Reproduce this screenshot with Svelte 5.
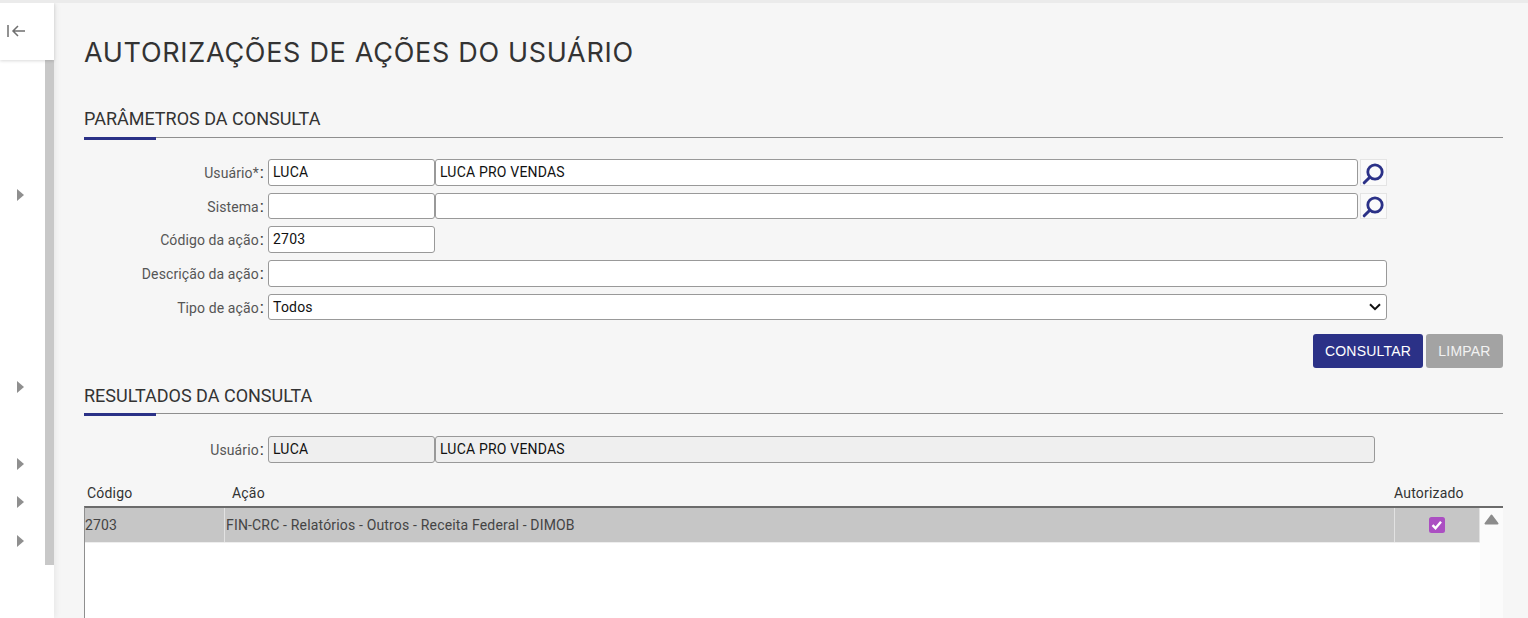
<script>
  const side = [194, 386, 463, 501, 540];
</script>

<div class="page">
  <aside class="side">
    <div class="toggle">
      <svg width="19" height="14" viewBox="0 0 19 14" fill="none" stroke="#6f6f6f" stroke-width="1.5"><path d="M1 1v12M18 7H6M11 2L6 7l5 5"/></svg>
    </div>
    <div class="rail">
      {#each side as y}
        <span class="tri" style="top:{y - 65}px"></span>
      {/each}
      <div class="thumb"></div>
    </div>
  </aside>

  <main class="main">
    <h1>AUTORIZAÇÕES DE AÇÕES DO USUÁRIO</h1>

    <section class="sec first">
      <h2>PARÂMETROS DA CONSULTA</h2>
    </section>

    <div class="form">
      <div class="row">
        <span class="lbl">Usuário*<b>:</b></span>
        <span class="inp code">LUCA</span>
        <span class="inp grow">LUCA PRO VENDAS</span>
        <button class="lens" aria-label="Buscar"><svg width="25" height="25" viewBox="0 0 25 25" fill="none" stroke="#2b3187"><circle cx="14" cy="12" r="7.2" stroke-width="2.8"/><path d="M8.8 17.2L3.2 22.8" stroke-width="3" stroke-linecap="round"/></svg></button>
      </div>
      <div class="row">
        <span class="lbl">Sistema<b>:</b></span>
        <span class="inp code"></span>
        <span class="inp grow"></span>
        <button class="lens" aria-label="Buscar"><svg width="25" height="25" viewBox="0 0 25 25" fill="none" stroke="#2b3187"><circle cx="14" cy="12" r="7.2" stroke-width="2.8"/><path d="M8.8 17.2L3.2 22.8" stroke-width="3" stroke-linecap="round"/></svg></button>
      </div>
      <div class="row">
        <span class="lbl">Código da ação<b>:</b></span>
        <span class="inp code">2703</span>
      </div>
      <div class="row">
        <span class="lbl">Descrição da ação<b>:</b></span>
        <span class="inp grow"></span>
      </div>
      <div class="row">
        <span class="lbl">Tipo de ação<b>:</b></span>
        <span class="inp grow sel">Todos
          <svg width="12" height="8" viewBox="0 0 12 8" fill="none" stroke="#111" stroke-width="2"><path d="M1 1.2l5 5 5-5"/></svg>
        </span>
      </div>
    </div>

    <div class="actions">
      <button class="btn primary">CONSULTAR</button>
      <button class="btn muted">LIMPAR</button>
    </div>

    <section class="sec second">
      <h2>RESULTADOS DA CONSULTA</h2>
    </section>

    <div class="row result">
      <span class="lbl">Usuário<b>:</b></span>
      <span class="inp code off">LUCA</span>
      <span class="inp grow off">LUCA PRO VENDAS</span>
    </div>

    <div class="thead">
      <span class="c1">Código</span>
      <span class="c2">Ação</span>
      <span class="c3">Autorizado</span>
    </div>
    <div class="tbody">
      <div class="rows">
        <div class="tr">
          <span class="td c1">2703</span>
          <span class="td c2">FIN-CRC - Relatórios - Outros - Receita Federal - DIMOB</span>
          <span class="td c3">
            <svg width="16" height="16" viewBox="0 0 16 16"><rect width="16" height="16" rx="2.5" fill="#ab4fc2"/><path d="M3.5 8.2l3 3 5.5-6.4" fill="none" stroke="#fff" stroke-width="2.4"/></svg>
          </span>
        </div>
      </div>
      <div class="vbar">
        <svg width="15" height="11" viewBox="0 0 15 11"><path d="M7.5 1.5L1.5 9.5h12z" fill="#8c8c8c" stroke="#8c8c8c" stroke-width="2" stroke-linejoin="round"/></svg>
      </div>
    </div>
  </main>
</div>

<style>
  :global(body) {
    margin: 0;
    background: #f6f6f6;
    overflow: hidden;
  }
  .page {
    display: flex;
    height: 618px;
    overflow: hidden;
    font-family: Roboto, sans-serif;
    color: #333;
    border-top: 3px solid #ebebeb;
    box-sizing: border-box;
  }
  .side {
    width: 54px;
    flex: none;
    background: #fff;
    display: flex;
    flex-direction: column;
    box-shadow: 2px 0 6px rgba(0, 0, 0, 0.06);
    position: relative;
  }
  .toggle {
    height: 57px;
    box-sizing: border-box;
    padding: 21px 0 0 7px;
    box-shadow: 0 1px 3px rgba(0, 0, 0, 0.15);
    position: relative;
    z-index: 1;
    background: #fff;
  }
  .toggle svg { display: block; }
  .rail {
    flex: 1;
    position: relative;
  }
  .thumb {
    position: absolute;
    right: 0;
    top: 0;
    width: 9px;
    height: 505px;
    background: #c8c8c8;
  }
  .tri {
    position: absolute;
    left: 17px;
    width: 0;
    height: 0;
    border-left: 7px solid #8f8f8f;
    border-top: 6px solid transparent;
    border-bottom: 6px solid transparent;
  }
  .main {
    flex: 1;
    min-width: 0;
    padding: 0 25px 0 30px;
    box-sizing: border-box;
  }
  h1 {
    margin: 32px 0 0;
    font: 400 27px/36px Inter, sans-serif;
    letter-spacing: 0.7px;
    color: #333;
    height: 36px;
  }
  .sec {
    border-bottom: 1px solid #8f8f8f;
    position: relative;
    height: 32px;
  }
  .sec.first { margin-top: 34px; }
  .sec::after {
    content: "";
    position: absolute;
    left: 0;
    bottom: -3px;
    width: 72px;
    height: 3px;
    background: #2b3187;
  }
  h2 {
    margin: 0;
    font: 400 18px/28px Roboto, sans-serif;
    color: #333;
    height: 32px;
  }
  .second h2 { line-height: 30px; }
  .form {
    margin-top: 21px;
    display: flex;
    flex-direction: column;
    gap: 7.2px;
    width: 1303px;
  }
  .row {
    display: flex;
    align-items: stretch;
    height: 26.5px;
  }
  .lbl {
    width: 184px;
    flex: none;
    box-sizing: border-box;
    padding-right: 4px;
    text-align: right;
    font-size: 14px;
    letter-spacing: 0.1px;
    line-height: 26px;
    color: #555;
    white-space: nowrap;
  }
  .lbl b {
    font-weight: 400;
    font-size: 17px;
    color: #333;
    margin-left: 1px;
  }
  .inp {
    box-sizing: border-box;
    border: 1px solid #999;
    border-radius: 3px;
    background: #fff;
    padding: 0 4px;
    font-size: 14px;
    letter-spacing: 0.2px;
    line-height: 24px;
    color: #111;
    display: block;
  }
  .code { width: 167px; flex: none; }
  .grow { flex: 1; min-width: 0; }
  .sel {
    display: flex;
    align-items: center;
    justify-content: space-between;
    padding-right: 5px;
  }
  .off { background: #efefef; }
  .lens {
    width: 27px;
    flex: none;
    margin-left: 2px;
    padding: 0;
    background: #fafafa;
    border: 1px solid #e4e4e4;
    display: flex;
    align-items: center;
    justify-content: center;
  }
  .actions {
    display: flex;
    justify-content: flex-end;
    gap: 3px;
    margin-top: 14px;
    margin-bottom: 13px;
  }
  .btn {
    height: 34px;
    border: 0;
    border-radius: 3px;
    color: #fff;
    font: 400 14px "Liberation Sans", sans-serif;
    letter-spacing: 0.2px;
    padding: 0;
  }
  .primary { width: 110px; background: #2b3187; }
  .muted { width: 77px; background: #a3a3a3; color: #f2f2f2; }
  .result {
    margin-top: 22px;
    width: 1291px;
  }
  .thead {
    display: flex;
    height: 26px;
    margin-top: 17px;
    align-items: center;
    font-size: 14px;
    letter-spacing: 0.2px;
    color: #333;
  }
  .thead .c1 { width: 148px; padding-left: 3px; box-sizing: border-box; }
  .thead .c2 { flex: 1; }
  .thead .c3 { width: 109px; }
  .tbody {
    display: flex;
    height: 200px;
    border-top: 2px solid #6b6b6b;
    border-left: 1px solid #8f8f8f;
    background: #fff;
  }
  .rows { flex: 1; min-width: 0; }
  .tr {
    display: flex;
    height: 34px;
    background: #c6c6c6;
    box-shadow: 0 1px 0 #eee;
  }
  .td {
    font-size: 14px;
    letter-spacing: 0.17px;
    line-height: 34px;
    color: #444;
    box-sizing: border-box;
    border-right: 1px solid #e2e2e2;
  }
  .td.c1 { width: 140px; }
  .td.c2 { flex: 1; padding-left: 1px; }
  .td.c3 {
    width: 85px;
    display: flex;
    align-items: center;
    justify-content: center;
  }
  .vbar {
    width: 23px;
    flex: none;
    background: #fbfbfb;
    padding: 6px 0 0 4px;
    box-sizing: border-box;
  }
  .vbar svg { display: block; }
</style>
